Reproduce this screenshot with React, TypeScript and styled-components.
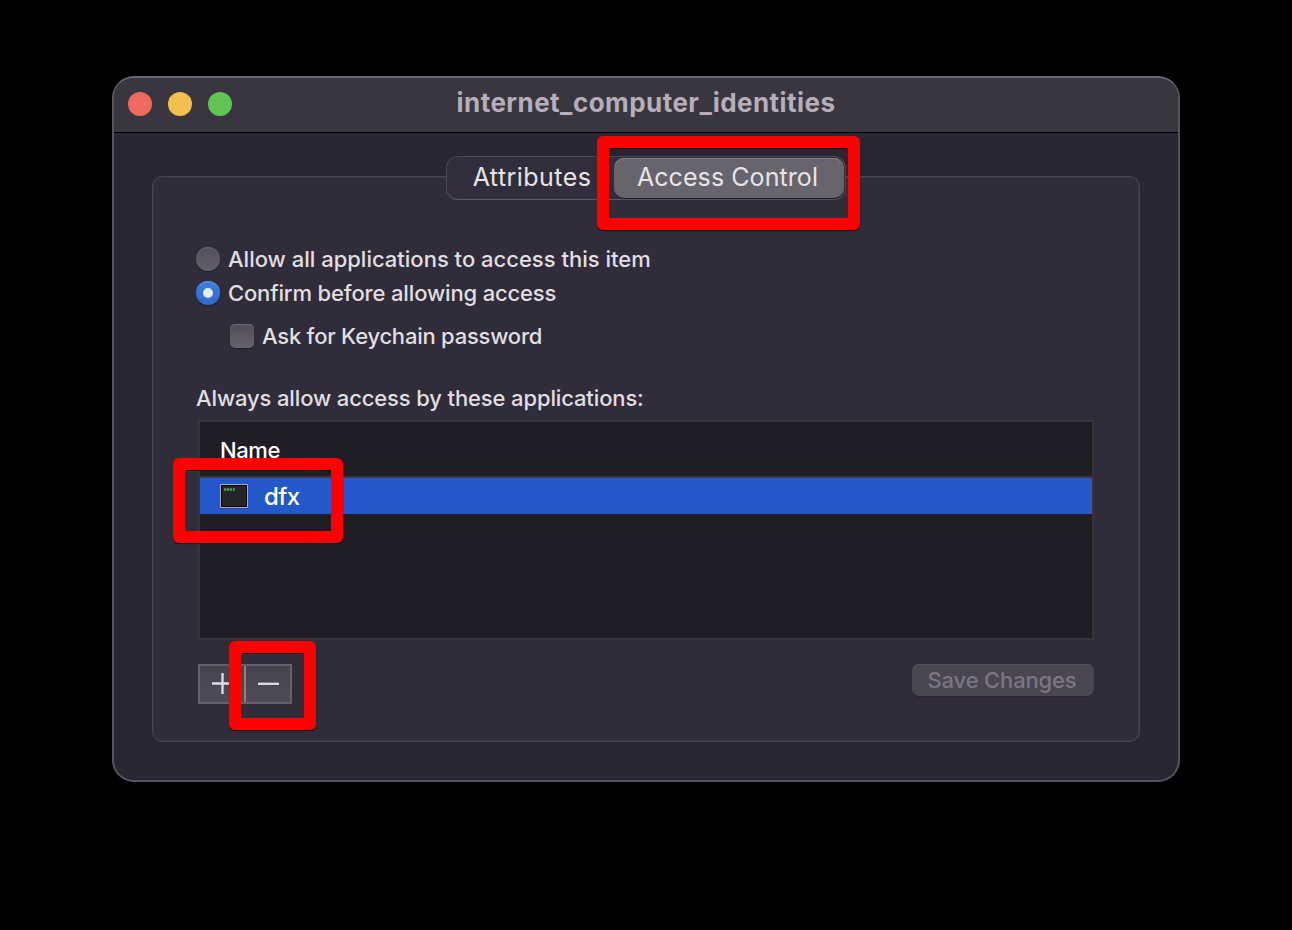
import React from "react";
import styled, { createGlobalStyle } from "styled-components";

const GlobalStyle = createGlobalStyle`
  * { box-sizing: border-box; }
  body {
    margin: 0;
    background: #000;
    font-family: Inter, "Liberation Sans", sans-serif;
    color: #e0dfe2;
  }
`;

const Desktop = styled.main`
  position: relative;
  width: 1292px;
  height: 930px;
  padding: 76px 112px;
  background: #000;
  overflow: hidden;
`;

const Window = styled.section`
  height: 706px;
  display: flex;
  flex-direction: column;
  border: 2px solid #56535d;
  border-top-color: #68666c;
  border-radius: 22px;
  background: #2a2533;
  overflow: hidden;
`;

const TitleBar = styled.header`
  flex: none;
  height: 55px;
  padding: 0 14px;
  display: grid;
  grid-template-columns: 1fr auto 1fr;
  align-items: center;
  background: #3a363f;
  border-bottom: 1px solid #000;
`;

const Lights = styled.div`
  display: flex;
  gap: 16px;
  margin-top: -2px;
`;

const Light = styled.span<{ $color: string }>`
  width: 24px;
  height: 24px;
  border-radius: 50%;
  background: ${(p) => p.$color};
`;

const Title = styled.h1`
  margin: -5px 0 0;
  font-size: 26px;
  line-height: 32px;
  font-weight: 700;
  letter-spacing: 0.45px;
  color: #b4afbb;
`;

const Content = styled.div`
  flex: 1;
  padding: 43px 38px 38px;
`;

const Group = styled.div`
  height: 566px;
  display: flex;
  flex-direction: column;
  padding: 0 43px;
  border: 1px solid #48454f;
  border-radius: 10px;
  background: #312c39;
  box-shadow: inset 0 0 0 1px #393541;
`;

const Tabs = styled.div`
  align-self: center;
  flex: none;
  display: flex;
  width: 400px;
  height: 44px;
  margin-top: -21px;
  padding: 1px;
  border: 1px solid #4b4853;
  border-bottom-color: #5c5964;
  border-radius: 12px;
  background: #322d3a;
`;

const Tab = styled.button<{ $active?: boolean; $width: number; $spacing: number }>`
  width: ${(p) => p.$width}px;
  height: 40px;
  padding: ${(p) => (p.$active ? "0 3px 2px 0" : "0 0 2px 2px")};
  border: 0;
  border-radius: 10px;
  font: 420 25px/38px Inter, sans-serif;
  letter-spacing: ${(p) => p.$spacing}px;
  white-space: nowrap;
  color: #e6e4e8;
  background: ${(p) => (p.$active ? "#68646e" : "transparent")};
  box-shadow: ${(p) => (p.$active ? "inset 0 1px 0 #85828a, 0 1px 1px #211d28" : "none")};
`;

const Options = styled.div`
  display: flex;
  flex-direction: column;
  margin-top: 42px;
`;

const Option = styled.label<{ $indent?: boolean }>`
  display: flex;
  align-items: center;
  gap: 8px;
  height: 34px;
  margin: ${(p) => (p.$indent ? "9px 0 0 34px" : "0")};
`;

const Label = styled.span<{ $spacing: number }>`
  font-size: 22px;
  line-height: 30px;
  font-weight: 450;
  letter-spacing: ${(p) => p.$spacing}px;
  white-space: nowrap;
`;

const Radio = styled.span<{ $checked?: boolean }>`
  width: 24px;
  height: 24px;
  display: grid;
  place-items: center;
  border-radius: 50%;
  background: ${(p) =>
    p.$checked ? "linear-gradient(#3d7ee0, #2e69ca)" : "linear-gradient(#524e59, #66626c)"};
  box-shadow: inset 0 1px 0 ${(p) => (p.$checked ? "#5b91e4" : "#68646e")}, 0 1px 1px #211d28;

  &::after {
    content: "";
    width: 10px;
    height: 10px;
    border-radius: 50%;
    background: ${(p) => (p.$checked ? "#e0eafa" : "transparent")};
  }
`;

const Checkbox = styled.span`
  width: 24px;
  height: 24px;
  border-radius: 5px;
  background: linear-gradient(#524e59, #66626c);
  box-shadow: inset 0 1px 0 #6b6771, 0 1px 1px #211d28;
`;

const Caption = styled.div`
  margin-top: 30px;
  height: 30px;
`;

const Table = styled.div`
  flex: none;
  height: 220px;
  margin: 7px 2px 0;
  border: 2px solid #373537;
  background: #211d27;
  color: #fff;
`;

const TableHead = styled.div`
  height: 56px;
  padding: 13px 20px 0;
  border-bottom: 2px solid #3b3742;
  font-size: 22px;
  line-height: 30px;
  font-weight: 500;
  letter-spacing: -0.4px;
`;

const TableRow = styled.div`
  height: 36px;
  padding: 0 20px;
  display: flex;
  align-items: center;
  gap: 16px;
  background: #2457c9;
  font-size: 24px;
  line-height: 34px;
`;

const AppName = styled.span`
  padding-top: 2px;
  font-weight: 500;
  letter-spacing: -0.6px;
`;

const Footer = styled.div`
  display: flex;
  justify-content: space-between;
  align-items: flex-start;
  margin: 24px 2px 0;
`;

const ButtonPair = styled.div`
  display: flex;
  width: 94px;
  height: 40px;
  border: 2px solid #65616c;
  background: linear-gradient(#46424e, #504c57);
`;

const SquareButton = styled.button`
  flex: 1;
  padding: 0;
  border: 0;
  background: none;
  & + & { border-left: 2px solid #85828b; }
  svg { display: block; }
`;

const SaveButton = styled.button`
  width: 182px;
  height: 32px;
  padding: 0 2px 0 0;
  border: 0;
  border-radius: 7px;
  background: #4a4651;
  box-shadow: inset 0 1px 0 #57535e, 0 1px 1px #28232f;
  font: 450 22px/32px Inter, sans-serif;
  letter-spacing: -0.17px;
  color: #7a7681;
`;

const Highlight = styled.div<{ $x: number; $y: number; $w: number; $h: number }>`
  position: absolute;
  left: ${(p) => p.$x}px;
  top: ${(p) => p.$y}px;
  width: ${(p) => p.$w}px;
  height: ${(p) => p.$h}px;
  border: 12px solid #f00;
  border-radius: 6px;
  box-shadow: inset 0 1px 0 rgba(0, 0, 0, 0.7), 0 1px 1px rgba(0, 0, 0, 0.7);
  pointer-events: none;
`;

const TerminalIcon = () => (
  <svg width="28" height="26" viewBox="0 0 28 26">
    <rect x="0" y="2" width="28" height="24" rx="1" fill="#17377d" opacity=".5" />
    <rect x="0" y="1" width="28" height="24" rx="1" fill="#a9adb4" />
    <rect x="1" y="2" width="26" height="22" fill="#050505" />
    <rect x="2" y="3" width="24" height="20" fill="#252525" />
    <path d="M4 6.5h2.4M7 6.5h2.4M10 6.5h2M12.8 6.5h2" stroke="#55b851" strokeWidth="2.6" opacity=".85" />
  </svg>
);

export default function App() {
  return (
    <>
      <GlobalStyle />
      <Desktop>
        <Window>
          <TitleBar>
            <Lights>
              <Light $color="#ee6a5f" />
              <Light $color="#f5bf4f" />
              <Light $color="#61c554" />
            </Lights>
            <Title>internet_computer_identities</Title>
          </TitleBar>
          <Content>
            <Group>
              <Tabs>
                <Tab $width={166} $spacing={0.45}>Attributes</Tab>
                <Tab $active $width={230} $spacing={0.08}>Access Control</Tab>
              </Tabs>
              <Options>
                <Option>
                  <Radio />
                  <Label $spacing={0}>Allow all applications to access this item</Label>
                </Option>
                <Option>
                  <Radio $checked />
                  <Label $spacing={-0.15}>Confirm before allowing access</Label>
                </Option>
                <Option $indent>
                  <Checkbox />
                  <Label $spacing={-0.23}>Ask for Keychain password</Label>
                </Option>
              </Options>
              <Caption>
                <Label $spacing={-0.13}>Always allow access by these applications:</Label>
              </Caption>
              <Table>
                <TableHead>Name</TableHead>
                <TableRow>
                  <TerminalIcon />
                  <AppName>dfx</AppName>
                </TableRow>
              </Table>
              <Footer>
                <ButtonPair>
                  <SquareButton aria-label="Add">
                    <svg width="44" height="36" viewBox="0 0 44 36">
                      <path d="M12 17.5h21M22.5 7v21" stroke="#e0dee2" strokeWidth="2.3" />
                    </svg>
                  </SquareButton>
                  <SquareButton aria-label="Remove">
                    <svg width="44" height="36" viewBox="0 0 44 36">
                      <path d="M12 17.8h21" stroke="#e0dee2" strokeWidth="2.3" />
                    </svg>
                  </SquareButton>
                </ButtonPair>
                <SaveButton disabled>Save Changes</SaveButton>
              </Footer>
            </Group>
          </Content>
        </Window>
        <Highlight $x={597} $y={136} $w={263} $h={94} />
        <Highlight $x={173} $y={458} $w={170} $h={85} />
        <Highlight $x={229} $y={641} $w={87} $h={89} />
      </Desktop>
    </>
  );
}
